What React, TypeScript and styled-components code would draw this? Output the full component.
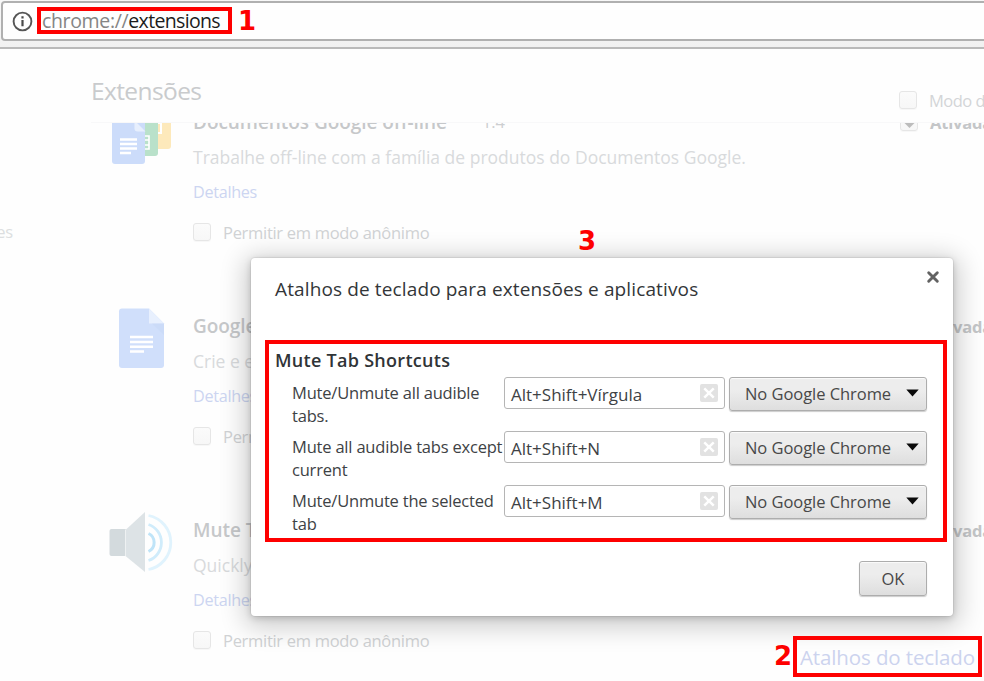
import React from 'react';
import styled, { createGlobalStyle, css } from 'styled-components';

const GlobalStyle = createGlobalStyle`
  * { box-sizing: border-box; }
  body { margin: 0; overflow: hidden; background: #fefefe; }
`;

const Window = styled.div`
  position: relative;
  display: flex;
  flex-direction: column;
  width: 984px;
  height: 681px;
  overflow: hidden;
  background: #fefefe;
  color: #303942;
  font-family: 'Open Sans', 'Noto Sans', sans-serif;
  font-size: 16.5px;
  white-space: nowrap;
`;

const Toolbar = styled.header`
  flex: none;
  height: 49px;
  padding: 1px 0 0 1px;
  background: linear-gradient(#f8f8f8, #f1f1f1);
  border-bottom: 2px solid #bababa;
`;

const AddressBar = styled.div`
  display: flex;
  align-items: center;
  width: 1000px;
  height: 40px;
  padding-left: 9px;
  border: 2px solid #b0b0b0;
  border-radius: 4px;
  background: #fefefe;
`;

const Url = styled.div`
  display: flex;
  margin: -1px 0 0 9px;
  font-size: 19.5px;
  line-height: 28px;
`;

const Scheme = styled.span`
  color: #858585;
  letter-spacing: -0.35px;
`;

const Host = styled.span`
  color: #1c1c1c;
  letter-spacing: -0.65px;
`;

const Page = styled.div`
  flex: 1;
  display: grid;
  grid-template-columns: 91px 1fr;
  min-height: 0;
`;

const Sidebar = styled.nav`
  display: flex;
  justify-content: flex-end;
  align-items: flex-start;
  width: 13px;
  padding-top: 172px;
  color: #dcdee0;
  letter-spacing: -0.2px;
  line-height: 22px;
`;

const Main = styled.main`
  display: flex;
  flex-direction: column;
  min-height: 0;
`;

const PageHeader = styled.div`
  display: flex;
  flex: none;
  height: 74px;
  border-bottom: 1px solid #f8f8f9;
`;

const PageTitle = styled.h1`
  flex: none;
  width: 808px;
  margin: 0;
  padding-top: 25px;
  color: #c9cbcd;
  font-size: 24.5px;
  font-weight: 400;
  letter-spacing: -0.6px;
  line-height: 34px;
`;

const DevMode = styled.label`
  display: flex;
  gap: 12px;
  align-items: center;
  height: 22px;
  margin-top: 40px;
  color: #d3d5d7;
  letter-spacing: -0.5px;
`;

const Checkbox = styled.span`
  flex: none;
  display: flex;
  align-items: center;
  justify-content: center;
  width: 18px;
  height: 18px;
  border: 1.5px solid #e6e6e6;
  border-radius: 3px;
  background: linear-gradient(#fbfbfb, #f7f7f7);
  box-shadow: 0 1px 1px rgba(0, 0, 0, 0.03);
`;

const ExtensionList = styled.div`
  flex: 1;
  min-height: 0;
  overflow: hidden;
`;

const Extension = styled.section`
  display: grid;
  grid-template-columns: 102px 707px 1fr;
  height: 204px;

  &:first-child {
    margin-top: -15px;
  }
`;

const IconSlot = styled.div`
  padding: 0 0 0 18px;
  margin-top: -4px;
`;

const Details = styled.div`
  display: flex;
  flex-direction: column;
`;

const Name = styled.div`
  display: flex;
  gap: 35px;
  height: 28px;
  color: #c6c8ca;
  font-size: 19px;
  font-weight: 600;
  letter-spacing: -0.05px;
  line-height: 28px;
`;

const Version = styled.span`
  color: #cdcfd1;
  font-size: 16.5px;
  font-weight: 400;
`;

const Description = styled.p`
  margin: 9px 0 0;
  color: #d8dadc;
  font-size: 17.5px;
  line-height: 25px;
`;

const DetailsLink = styled.a`
  margin-top: 10px;
  color: #ccd5f1;
  font-size: 16.2px;
  letter-spacing: -0.3px;
  line-height: 24px;
`;

const Permission = styled.label`
  display: flex;
  gap: 12px;
  align-items: center;
  height: 24px;
  margin-top: 16px;
  color: #d0d2d4;
  letter-spacing: -0.3px;
`;

const Enabled = styled.label`
  display: flex;
  gap: 12px;
  align-items: center;
  height: 28px;
  color: #c4c6c8;
  font-size: 16.5px;
  font-weight: 700;
  letter-spacing: -0.2px;
`;

const Dialog = styled.section`
  position: absolute;
  left: 251px;
  top: 258px;
  display: flex;
  flex-direction: column;
  width: 702px;
  height: 358px;
  padding: 16px 26px 19px 24px;
  border-radius: 4px;
  background: #fff;
  box-shadow: 0 5px 26px 6px rgba(0, 0, 0, 0.2), 0 2px 7px rgba(0, 0, 0, 0.18), 0 0 0 1px rgba(0, 0, 0, 0.05);
`;

const DialogHeader = styled.div`
  display: flex;
  justify-content: space-between;
  align-items: flex-start;
  height: 72px;
`;

const DialogTitle = styled.h2`
  margin: 0;
  color: #333638;
  font-size: 19px;
  font-weight: 400;
  letter-spacing: 0.13px;
  line-height: 30px;
`;

const CloseButton = styled.button`
  margin: -5px -14px 0 0;
  padding: 1px;
  border: 0;
  background: none;
  line-height: 0;
`;

const GroupTitle = styled.h3`
  margin: 0;
  color: #303437;
  font-size: 18px;
  font-weight: 600;
  letter-spacing: 0.28px;
  line-height: 28px;
`;

const Shortcuts = styled.div`
  display: flex;
  flex-direction: column;
  padding: 3px 0 0 17px;
`;

const ShortcutRow = styled.div`
  display: grid;
  grid-template-columns: 212px 221px 198px;
  align-items: start;
  height: 54px;
`;

const ShortcutLabel = styled.div`
  margin-top: 4px;
  color: #3e4245;
  letter-spacing: -0.2px;
  line-height: 23px;
`;

const KeyField = styled.div`
  display: flex;
  align-items: center;
  justify-content: space-between;
  height: 32px;
  padding: 2px 6px 0 6px;
  border: 1.5px solid #b5b5b5;
  border-radius: 3px;
  background: #fff;
  color: #3e4245;
  font-size: 17px;
`;

const ClearKey = styled.span`
  display: flex;
  margin-top: -2px;
`;

const raised = css`
  border: 1.5px solid #adadad;
  border-radius: 3px;
  background: linear-gradient(#ededed, #ededed 38%, #dedede);
  box-shadow: 0 1px 1px rgba(0, 0, 0, 0.2), inset 0 1px 1px rgba(255, 255, 255, 0.8);
  color: #484848;
  font-family: inherit;
  font-size: 16.5px;
`;

const ScopeSelect = styled.button`
  ${raised}
  display: flex;
  align-items: center;
  justify-content: space-between;
  width: 198px;
  height: 34px;
  margin-left: 4px;
  padding: 0 7px 2px 15px;
  letter-spacing: -0.05px;
`;

const OkButton = styled.button`
  ${raised}
  align-self: flex-end;
  width: 68px;
  height: 35px;
  margin-top: auto;
  margin-bottom: 1px;
  padding: 0;
`;

const Highlight = styled.div<{ $x: number; $y: number; $w: number; $h: number }>`
  position: absolute;
  left: ${(p) => p.$x}px;
  top: ${(p) => p.$y}px;
  width: ${(p) => p.$w}px;
  height: ${(p) => p.$h}px;
  border: 4px solid #fe0000;
`;

const StepNumber = styled.span<{ $x: number; $y: number }>`
  position: absolute;
  left: ${(p) => p.$x}px;
  top: ${(p) => p.$y}px;
  color: #fe0000;
  font: 700 26px/30px 'DejaVu Sans', sans-serif;
`;

const ShortcutsLink = styled.a`
  position: absolute;
  left: 800px;
  top: 642px;
  color: #ccd3ee;
  font-size: 20.5px;
  letter-spacing: -0.12px;
  line-height: 30px;
`;

const InfoIcon = () => (
  <svg width="21" height="21" viewBox="0 0 21 21" fill="none">
    <circle cx="10.5" cy="10.5" r="8.9" stroke="#555" strokeWidth="1.9" />
    <path d="M10.5 9v6.3M10.5 5.3v2.3" stroke="#4a4a4a" strokeWidth="2.2" />
  </svg>
);

const DocsSetIcon = () => (
  <svg width="66" height="64" viewBox="0 0 66 64">
    <path d="M34 6h25q3 0 3 3v33q0 3-3 3H34z" fill="#fde9bb" />
    <path d="M49 19h3v10h-3" fill="none" stroke="#fff" strokeWidth="2" />
    <path d="M20 6h25q4 0 4 4v39q0 3-3 3H20z" fill="#b9e1ca" />
    <path d="M35 32h5v13h-5M35 36h5M35 41h5" fill="none" stroke="#fff" strokeWidth="1.6" />
    <path d="M6 4h20l10 11v42q0 3-3 3H6q-3 0-3-3V7q0-3 3-3z" fill="#ccdcfa" />
    <path d="M25.500 18.500h2l9 9H28.500q-3 0-3-3z" fill="#e7effd" />
    <path d="M11 35.5h17M11 40h17M11 44.5h17M11 49h11" stroke="#fff" strokeWidth="2.4" />
  </svg>
);

const DocIcon = () => (
  <svg width="66" height="64" viewBox="0 0 66 64">
    <path d="M13 .5h27l15 15v41.500q0 3-3 3H13q-3 0-3-3v-53.500q0-3 3-3z" fill="#d0dffb" />
    <path d="M40 .5l15 15H40z" fill="#e8f0fe" />
    <path d="M43 15.500h12V27z" fill="#c5d6f5" opacity=".45" />
    <path d="M21 29h23M21 34h23M21 38.800h23M21 43.600h14" stroke="#fff" strokeWidth="2.5" />
  </svg>
);

const SpeakerIcon = () => (
  <svg width="66" height="64" viewBox="0 0 66 64" fill="none">
    <rect x=".5" y="17" width="17" height="27" rx="2" fill="#d3dadd" />
    <path d="M16.500 18L36 0v60L16.500 44z" fill="#dde3e6" />
    <path d="M16.500 18v26" stroke="#eef1f2" />
    <path d="M39.500 21.500a10 10 0 0 1 0 18" stroke="#bfe4f8" strokeWidth="3" />
    <path d="M39.500 12.500a19 19 0 0 1 0 36" stroke="#d0ecfb" strokeWidth="2.800" />
    <path d="M39.500 3.500a27.500 27.500 0 0 1 0 54" stroke="#e0f3fd" strokeWidth="2.800" />
  </svg>
);

const CloseIcon = () => (
  <svg width="14" height="14" viewBox="0 0 14 14">
    <path d="M2.700 2.700l8.600 8.600M11.300 2.700l-8.600 8.600" stroke="#626262" strokeWidth="2.900" strokeLinecap="round" />
  </svg>
);

const ClearIcon = () => (
  <svg width="18" height="18" viewBox="0 0 19 19">
    <rect width="19" height="19" rx="2" fill="#e2e2e2" />
    <path d="M4.500 4.500l10 10M14.500 4.500l-10 10" stroke="#fff" strokeWidth="2.600" />
  </svg>
);

const CaretIcon = () => (
  <svg width="13" height="8" viewBox="0 0 13 8">
    <path d="M.3.500h12.400L6.500 7.500z" fill="#0a0a0a" />
  </svg>
);

const CheckedIcon = () => (
  <svg width="13" height="13" viewBox="0 0 13 13">
    <path d="M1 6.500h11L6.500 12z" fill="#bcbcbc" />
  </svg>
);

const extensions = [
  { name: 'Documentos Google off-line', version: '1.4', text: 'Trabalhe off-line com a família de produtos do Documentos Google.', Icon: DocsSetIcon },
  { name: 'Google', text: 'Crie e edite', Icon: DocIcon },
  { name: 'Mute Tab', text: 'Quickly', Icon: SpeakerIcon },
];

const shortcuts = [
  { label: ['Mute/Unmute all audible', 'tabs.'], keys: 'Alt+Shift+Vírgula' },
  { label: ['Mute all audible tabs except', 'current'], keys: 'Alt+Shift+N' },
  { label: ['Mute/Unmute the selected', 'tab'], keys: 'Alt+Shift+M' },
];

export default function App() {
  return (
    <Window>
      <GlobalStyle />
      <Toolbar>
        <AddressBar>
          <InfoIcon />
          <Url>
            <Scheme>chrome://</Scheme>
            <Host>extensions</Host>
          </Url>
        </AddressBar>
      </Toolbar>

      <Page>
        <Sidebar>es</Sidebar>
        <Main>
          <PageHeader>
            <PageTitle>Extensões</PageTitle>
            <DevMode>
              <Checkbox />
              Modo do desenvolvedor
            </DevMode>
          </PageHeader>
          <ExtensionList>
            {extensions.map(({ name, version, text, Icon }) => (
              <Extension key={name}>
                <IconSlot>
                  <Icon />
                </IconSlot>
                <Details>
                  <Name>
                    {name}
                    {version && <Version>{version}</Version>}
                  </Name>
                  <Description>{text}</Description>
                  <DetailsLink>Detalhes</DetailsLink>
                  <Permission>
                    <Checkbox />
                    Permitir em modo anônimo
                  </Permission>
                </Details>
                <Enabled>
                  <Checkbox>
                    <CheckedIcon />
                  </Checkbox>
                  Ativada
                </Enabled>
              </Extension>
            ))}
          </ExtensionList>
        </Main>
      </Page>

      <ShortcutsLink>Atalhos do teclado</ShortcutsLink>

      <Dialog>
        <DialogHeader>
          <DialogTitle>Atalhos de teclado para extensões e aplicativos</DialogTitle>
          <CloseButton aria-label="Fechar">
            <CloseIcon />
          </CloseButton>
        </DialogHeader>
        <GroupTitle>Mute Tab Shortcuts</GroupTitle>
        <Shortcuts>
          {shortcuts.map(({ label, keys }) => (
            <ShortcutRow key={keys}>
              <ShortcutLabel>
                {label[0]}
                <br />
                {label[1]}
              </ShortcutLabel>
              <KeyField>
                {keys}
                <ClearKey>
                  <ClearIcon />
                </ClearKey>
              </KeyField>
              <ScopeSelect>
                No Google Chrome
                <CaretIcon />
              </ScopeSelect>
            </ShortcutRow>
          ))}
        </Shortcuts>
        <OkButton>OK</OkButton>
      </Dialog>

      <Highlight $x={37} $y={7} $w={195} $h={27} />
      <Highlight $x={265} $y={340} $w={682} $h={202} />
      <Highlight $x={793} $y={636} $w={189} $h={41} />
      <StepNumber $x={238} $y={6}>1</StepNumber>
      <StepNumber $x={774} $y={641}>2</StepNumber>
      <StepNumber $x={578} $y={226}>3</StepNumber>
    </Window>
  );
}
